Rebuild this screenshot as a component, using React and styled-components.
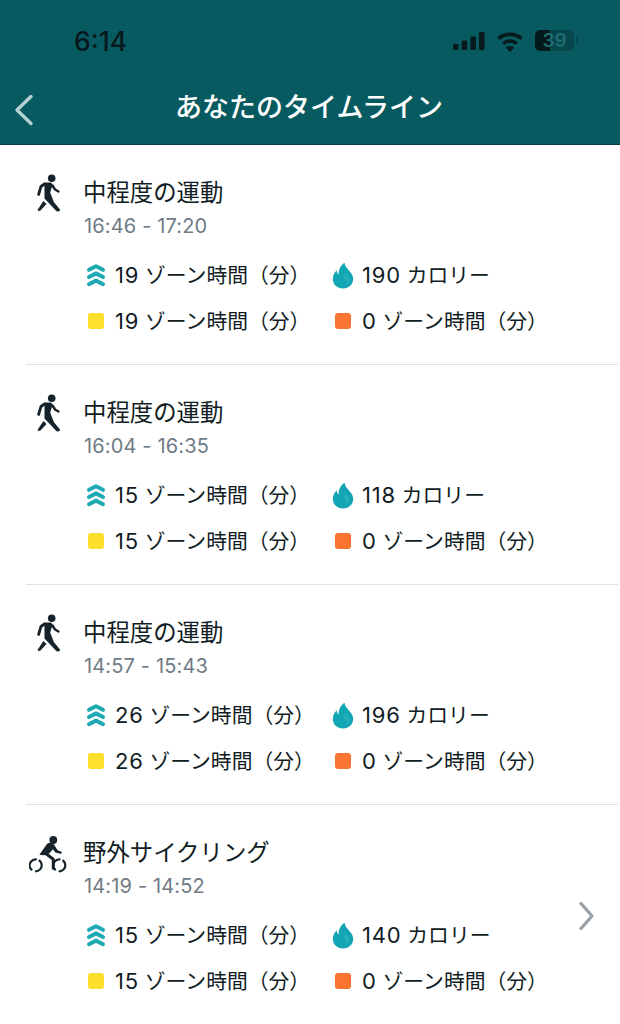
import React from "react";
import styled, { createGlobalStyle } from "styled-components";

const GlobalStyle = createGlobalStyle`
  html, body {
    margin: 0;
    padding: 0;
    background: #fff;
    overflow: hidden;
  }
  * {
    box-sizing: border-box;
  }
`;

const sessions = [
  { kind: "walk", title: "中程度の運動", time: "16:46 - 17:20", zone: 19, cal: 190 },
  { kind: "walk", title: "中程度の運動", time: "16:04 - 16:35", zone: 15, cal: 118 },
  { kind: "walk", title: "中程度の運動", time: "14:57 - 15:43", zone: 26, cal: 196 },
  { kind: "bike", title: "野外サイクリング", time: "14:19 - 14:52", zone: 15, cal: 140, more: true },
];

function WalkIcon() {
  return (
    <svg width="34" height="44" viewBox="0 0 34 44" fill="#17232b">
      <circle cx="21.700" cy="7.300" r="3.800" />
      <path d="M14.500 11.500h6q2 .5 2 2.500l-2.300 7.500 3.600 9.500 6.200 7.500q.3 1.700-1.500 1.900l-2-.2-7-7.500-5-5.300z" />
      <path d="M13.400 30l3.100 3-6 6.500q-2 1-3-.5z" />
      <g fill="none" stroke="#17232b" strokeLinecap="round" strokeLinejoin="round">
        <path d="M14.500 13l-3.500 2.500-2.400 8" strokeWidth="2.800" />
        <path d="M22.500 14.500l2.500 4 3.500 2" strokeWidth="2.400" />
      </g>
    </svg>
  );
}

function BikeIcon() {
  return (
    <svg width="42" height="44" viewBox="0 0 42 44" fill="#17232b">
      <circle cx="24.300" cy="9" r="3.900" />
      <path d="M10.500 23.500L18 13q2-1.800 4.500-1l2.500 1.500 3.500 5.800 3.500 1.300c1.300.6.800 2.500-.6 2.200l-5-1.300-2.500-3.300-3.400 4-4.500 2-4.500-.2z" />
      <g fill="none" stroke="#17232b" strokeLinecap="round" strokeLinejoin="round">
        <path d="M15.500 21.500l8.800 6.800v9" strokeWidth="3" />
        <circle cx="6.700" cy="34.300" r="6" strokeWidth="2.200" strokeDasharray="14 4.850" transform="rotate(-50 6.700 34.300)" />
        <circle cx="30.300" cy="34.300" r="6" strokeWidth="2.200" strokeDasharray="14 4.850" transform="rotate(-50 30.300 34.300)" />
      </g>
    </svg>
  );
}

function ZoneIcon() {
  return (
    <svg width="20" height="25" viewBox="0 0 20 25" fill="none" stroke="#1fa9b4" strokeWidth="4" strokeLinejoin="round" strokeLinecap="round">
      <path d="M3 6.800l7-3.600 7 3.600" />
      <path d="M3 14l7-3.600 7 3.600" />
      <path d="M3 21.200l7-3.600 7 3.600" />
    </svg>
  );
}

function FlameIcon() {
  return (
    <svg width="22" height="27" viewBox="0 0 22 27" fill="#12a6b5">
      <path d="M12.500 .800c.6 3.600 2.300 5.300 4.700 8 2.300 2.600 4 5 4 8.100 0 5.500-4.500 9.500-10.200 9.500S.800 22.400.800 16.900c0-3.500 1.500-6.300 3.900-8.700.2 2 .8 3.300 2 4.200C6.500 7.500 8.600 3.300 12.500 .800z" />
      <path d="M11.600 15.500c.4 1.500 1.500 2.300 2.300 3.400.9 1.300.6 3.400-1 4.300 2.600-.5 4.400-2.500 4.400-5 0-2.700-2.400-4.200-3-7.300-1.300 1.100-2.300 2.700-2.700 4.600z" fill="#53c3cd" opacity="0.3" />
    </svg>
  );
}

function App() {
  return (
    <Page>
      <GlobalStyle />
      <Header>
        <StatusBar>
          <Clock>6:14</Clock>
          <StatusIcons>
            <svg width="32" height="22" viewBox="0 0 32 22" fill="#07191c">
              <rect x="0" y="14" width="5.500" height="6" rx="1.200" />
              <rect x="8.700" y="10.500" width="5.500" height="9.500" rx="1.200" />
              <rect x="17.400" y="6.500" width="5.500" height="13.500" rx="1.200" />
              <rect x="26" y="2" width="5.500" height="18" rx="1.200" />
            </svg>
            <svg width="26" height="21" viewBox="0 0 26 21" fill="none" stroke="#07191c" strokeWidth="3.600">
              <path d="M1.400 7.600C8 2 18 2 24.600 7.600" />
              <path d="M6.200 12.500c3.900-3.400 9.700-3.400 13.600 0" />
              <path d="M13 21l-4.400-4.600c2.400-1.700 6.400-1.700 8.800 0z" fill="#07191c" stroke="none" />
            </svg>
            <Battery>39</Battery>
            <BatteryCap />
          </StatusIcons>
        </StatusBar>
        <NavBar>
          <BackIcon width="20" height="32" viewBox="0 0 20 32" fill="none" stroke="#b5d0d1" strokeWidth="3.400" strokeLinecap="round" strokeLinejoin="round">
            <path d="M17 2.500L3 16l14 13.500" />
          </BackIcon>
          <Title>あなたのタイムライン</Title>
        </NavBar>
      </Header>

      <List>
        {sessions.map((s) => (
          <Row key={s.time}>
            <IconCell $bike={s.kind === "bike"}>
              {s.kind === "bike" ? <BikeIcon /> : <WalkIcon />}
            </IconCell>
            <Body>
              <RowTitle>{s.title}</RowTitle>
              <Time>{s.time}</Time>
              <Stats>
                <Stat>
                  <StatIcon><ZoneIcon /></StatIcon>
                  <StatText><Num>{s.zone}</Num> ゾーン時間（分）</StatText>
                </Stat>
                <Stat>
                  <FlameSlot><FlameIcon /></FlameSlot>
                  <StatText><Num>{s.cal}</Num> カロリー</StatText>
                </Stat>
                <Stat>
                  <StatIcon><Square $color="#fde02b" $left="2px" /></StatIcon>
                  <StatText><Num>{s.zone}</Num> ゾーン時間（分）</StatText>
                </Stat>
                <Stat>
                  <FlameSlot><Square $color="#fb7431" $left="3px" /></FlameSlot>
                  <StatText><Num>0</Num> ゾーン時間（分）</StatText>
                </Stat>
              </Stats>
            </Body>
            {s.more && (
              <Chevron width="18" height="30" viewBox="0 0 18 30" fill="none" stroke="#9aa1a8" strokeWidth="3.200" strokeLinecap="round" strokeLinejoin="round">
                <path d="M2 2.500L13 15 2 27.500" />
              </Chevron>
            )}
          </Row>
        ))}
      </List>
    </Page>
  );
}

export default App;

const Page = styled.div`
  width: 620px;
  height: 1024px;
  overflow: hidden;
  background: #fff;
  font-family: Inter, "Noto Sans CJK JP", sans-serif;
`;

const Header = styled.header`
  height: 145px;
  background: #075a60;
  border-bottom: 1px solid #0b3b40;
`;

const StatusBar = styled.div`
  height: 82px;
  display: flex;
  justify-content: space-between;
  padding: 24px 42px 0 74px;
`;

const Clock = styled.div`
  font-size: 26.500px;
  line-height: 34px;
  font-weight: 500;
  color: #07191c;
`;

const StatusIcons = styled.div`
  display: flex;
  align-items: center;
  height: 34px;
  gap: 12px;
`;

const Battery = styled.div`
  width: 39px;
  height: 21px;
  margin-top: -2px;
  border-radius: 5px;
  background: linear-gradient(90deg, #04191c 0 38%, #05474b 38%);
  color: #1e6d72;
  font-size: 19px;
  font-weight: 600;
  line-height: 21px;
  text-align: center;
`;

const BatteryCap = styled.div`
  width: 2px;
  height: 8px;
  margin: -2px 0 0 -10px;
  background: #05474b;
  border-radius: 0 2px 2px 0;
`;

const NavBar = styled.div`
  position: relative;
  height: 52px;
  display: flex;
  align-items: center;
  justify-content: center;
  padding-right: 2px;
`;

const BackIcon = styled.svg`
  position: absolute;
  left: 14px;
  top: 12px;
`;

const Title = styled.h1`
  margin: 0;
  font-size: 27px;
  font-weight: 500;
  line-height: 52px;
  color: #fff;
`;

const List = styled.main`
  display: flex;
  flex-direction: column;
`;

const Row = styled.section`
  position: relative;
  height: 220px;
  margin: 0 2px 0 26px;
  display: flex;
  border-bottom: 1px solid #dfe1e3;
  &:last-child {
    border-bottom: 0;
  }
`;

const IconCell = styled.div`
  width: 58px;
  padding-top: 26px;
  padding-left: ${(p) => (p.$bike ? "3px" : "4px")};
  flex: none;
`;

const Body = styled.div`
  flex: 1;
  padding-top: 31px;
`;

const RowTitle = styled.h2`
  margin: 0 0 0 -1px;
  font-size: 23.400px;
  font-weight: 400;
  line-height: 34px;
  color: #111c23;
`;

const Time = styled.div`
  margin-top: 1px;
  font-size: 20px;
  letter-spacing: 0.15px;
  line-height: 30px;
  color: #6f7b85;
`;

const Stats = styled.div`
  margin-top: 11px;
  display: grid;
  grid-template-columns: 248px 1fr;
  grid-auto-rows: 46px;
`;

const Stat = styled.div`
  display: flex;
  align-items: center;
`;

const StatIcon = styled.div`
  width: 31px;
  flex: none;
  display: flex;
  align-items: center;
  padding-left: 2px;
  svg {
    display: block;
  }
`;

const FlameSlot = styled.div`
  width: 30px;
  flex: none;
  display: flex;
  align-items: center;
`;

const Square = styled.div`
  width: 16px;
  height: 16px;
  margin-left: ${(p) => p.$left};
  border-radius: 3px;
  background: ${(p) => p.$color};
`;

const StatText = styled.span`
  font-size: 20.800px;
  line-height: 30px;
  color: #111c23;
  white-space: nowrap;
`;

const Num = styled.span`
  font-size: 22px;
  letter-spacing: 0.8px;
`;

const Chevron = styled.svg`
  position: absolute;
  right: 21px;
  top: 96px;
`;
